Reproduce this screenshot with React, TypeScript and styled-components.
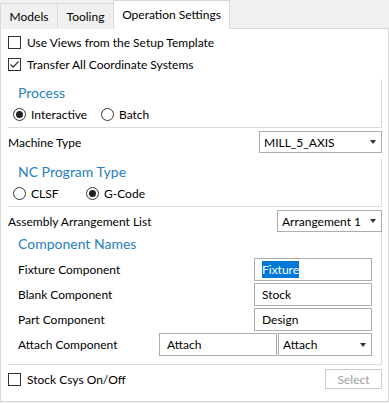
import React from "react";
import styled, { createGlobalStyle } from "styled-components";

const Global = createGlobalStyle`
  html, body { margin: 0; padding: 0; background: #f0f0f0; }
  body { font-family: Lato, "Noto Sans", sans-serif; font-size: 12px; color: #000; }
  * { box-sizing: border-box; }
`;

const Root = styled.div`
  width: 389px;
  height: 403px;
  background: #f0f0f0;
  display: flex;
  flex-direction: column;
`;

const TabBar = styled.div`
  display: flex;
  align-items: flex-end;
  height: 28px;
  position: relative;
  z-index: 1;
`;

const Tab = styled.div<{ $active?: boolean; $w: number }>`
  height: ${(p) => (p.$active ? 29 : 26)}px;
  width: ${(p) => p.$w}px;
  display: flex;
  align-items: center;
  justify-content: center;
  padding-bottom: ${(p) => (p.$active ? 2 : 0)}px;
  background: ${(p) => (p.$active ? "#fff" : "#f0f0f0")};
  border: 1px solid #d9d9d9;
  border-bottom: none;
  margin-left: -1px;
  margin-bottom: -1px;
  &:first-child { margin-left: 0; }
`;

const Panel = styled.div`
  height: 374px;
  background: #fff;
  border: 1px solid #d9d9d9;
  padding: 2px 6px 0 7px;
  display: flex;
  flex-direction: column;
`;

const CheckRow = styled.label<{ $h?: number }>`
  display: flex;
  align-items: center;
  gap: 6px;
  height: ${(p) => p.$h ?? 22}px;
`;

const Box = styled.span`
  width: 13px;
  height: 13px;
  border: 1px solid #333;
  background: #fff;
  display: inline-flex;
  align-items: center;
  justify-content: center;
  flex: none;
`;

const Group = styled.div<{ $mt: number; $pt: number; $pb: number }>`
  margin-top: ${(p) => p.$mt}px;
  padding: ${(p) => p.$pt}px 9px ${(p) => p.$pb}px 10px;
  border-right: 1px solid #dcdcdc;
  border-bottom: 1px solid #dcdcdc;
  display: flex;
  flex-direction: column;
`;

const GroupTitle = styled.div`
  height: 20px;
  display: flex;
  align-items: center;
  padding-bottom: 3px;
  font-size: 14px;
  color: #2680bd;
`;

const RadioRow = styled.div`
  height: 20px;
  display: flex;
  align-items: center;
  margin-left: -5px;
`;

const RadioItem = styled.label<{ $w: number }>`
  width: ${(p) => p.$w}px;
  display: flex;
  align-items: center;
  gap: 5px;
`;

const Circle = styled.span<{ $on?: boolean }>`
  width: 13px;
  height: 13px;
  border-radius: 50%;
  border: 1px solid #333;
  display: inline-flex;
  align-items: center;
  justify-content: center;
  flex: none;
  &::after {
    content: "";
    width: 7px;
    height: 7px;
    border-radius: 50%;
    background: ${(p) => (p.$on ? "#222" : "transparent")};
  }
`;

const FieldRow = styled.div<{ $mt: number }>`
  display: flex;
  align-items: center;
  justify-content: space-between;
  margin-top: ${(p) => p.$mt}px;
  height: 22px;
`;

const Combo = styled.div<{ $w: number; $h?: number; $ml?: number }>`
  width: ${(p) => p.$w}px;
  height: ${(p) => p.$h ?? 22}px;
  margin-left: ${(p) => p.$ml ?? 0}px;
  border: 1px solid #adadad;
  background: #fff;
  display: flex;
  align-items: center;
  justify-content: space-between;
  padding: 0 5px 0 4px;
  flex: none;
`;

const Arrow = styled.span`
  width: 0;
  height: 0;
  border-left: 3.5px solid transparent;
  border-right: 3.5px solid transparent;
  border-top: 4px solid #333;
`;

const CompRows = styled.div`
  margin-top: 2px;
  display: flex;
  flex-direction: column;
`;

const CompRow = styled.div`
  height: 25px;
  display: flex;
  align-items: center;
`;

const CompLabel = styled.span`
  flex: 1;
`;

const TextBox = styled.div<{ $w: number }>`
  width: ${(p) => p.$w}px;
  height: 23px;
  border: 1px solid #adadad;
  background: #fff;
  display: flex;
  align-items: center;
  padding-left: 7px;
  flex: none;
`;

const Selected = styled.span`
  background: #0078d7;
  color: #fff;
  padding: 1px 0;
`;

const BottomRow = styled.div`
  margin-top: 4px;
  display: flex;
  align-items: center;
  justify-content: space-between;
  height: 20px;
`;

const Button = styled.div`
  width: 57px;
  height: 20px;
  border: 1px solid #cccccc;
  background: #fff;
  color: #a0a0a0;
  display: flex;
  align-items: center;
  justify-content: center;
`;

const Check = () => (
  <svg width="11" height="11" viewBox="0 0 11 11">
    <path d="M1.5 5.5 L4.2 8.2 L9.5 2.5" fill="none" stroke="#333" strokeWidth="1.2" />
  </svg>
);

export default function App() {
  return (
    <Root>
      <Global />
      <TabBar>
        <Tab $w={58}>Models</Tab>
        <Tab $w={57}>Tooling</Tab>
        <Tab $w={117} $active>Operation Settings</Tab>
      </TabBar>
      <Panel>
        <CheckRow>
          <Box />
          Use Views from the Setup Template
        </CheckRow>
        <CheckRow>
          <Box>
            <Check />
          </Box>
          Transfer All Coordinate Systems
        </CheckRow>
        <Group $mt={4} $pt={5} $pb={3}>
          <GroupTitle>Process</GroupTitle>
          <RadioRow>
            <RadioItem $w={88}>
              <Circle $on />
              Interactive
            </RadioItem>
            <RadioItem $w={80}>
              <Circle />
              Batch
            </RadioItem>
          </RadioRow>
        </Group>
        <FieldRow $mt={3}>
          <span>Machine Type</span>
          <Combo $w={123}>
            <span>MILL_5_AXIS</span>
            <Arrow />
          </Combo>
        </FieldRow>
        <Group $mt={5} $pt={5} $pb={3}>
          <GroupTitle>NC Program Type</GroupTitle>
          <RadioRow>
            <RadioItem $w={73}>
              <Circle />
              CLSF
            </RadioItem>
            <RadioItem $w={80}>
              <Circle $on />
              G-Code
            </RadioItem>
          </RadioRow>
        </Group>
        <FieldRow $mt={3}>
          <span>Assembly Arrangement List</span>
          <Combo $w={105}>
            <span>Arrangement 1</span>
            <Arrow />
          </Combo>
        </FieldRow>
        <Group $mt={1} $pt={2} $pb={7}>
          <GroupTitle>Component Names</GroupTitle>
          <CompRows>
            <CompRow>
              <CompLabel>Fixture Component</CompLabel>
              <TextBox $w={118}>
                <Selected>Fixture</Selected>
              </TextBox>
            </CompRow>
            <CompRow>
              <CompLabel>Blank Component</CompLabel>
              <TextBox $w={118}>Stock</TextBox>
            </CompRow>
            <CompRow>
              <CompLabel>Part Component</CompLabel>
              <TextBox $w={118}>Design</TextBox>
            </CompRow>
            <CompRow>
              <CompLabel>Attach Component</CompLabel>
              <TextBox $w={118}>Attach</TextBox>
              <Combo $w={94} $h={23} $ml={1}>
                <span>Attach</span>
                <Arrow />
              </Combo>
            </CompRow>
          </CompRows>
        </Group>
        <BottomRow>
          <CheckRow $h={20}>
            <Box />
            Stock Csys On/Off
          </CheckRow>
          <Button>Select</Button>
        </BottomRow>
      </Panel>
    </Root>
  );
}
